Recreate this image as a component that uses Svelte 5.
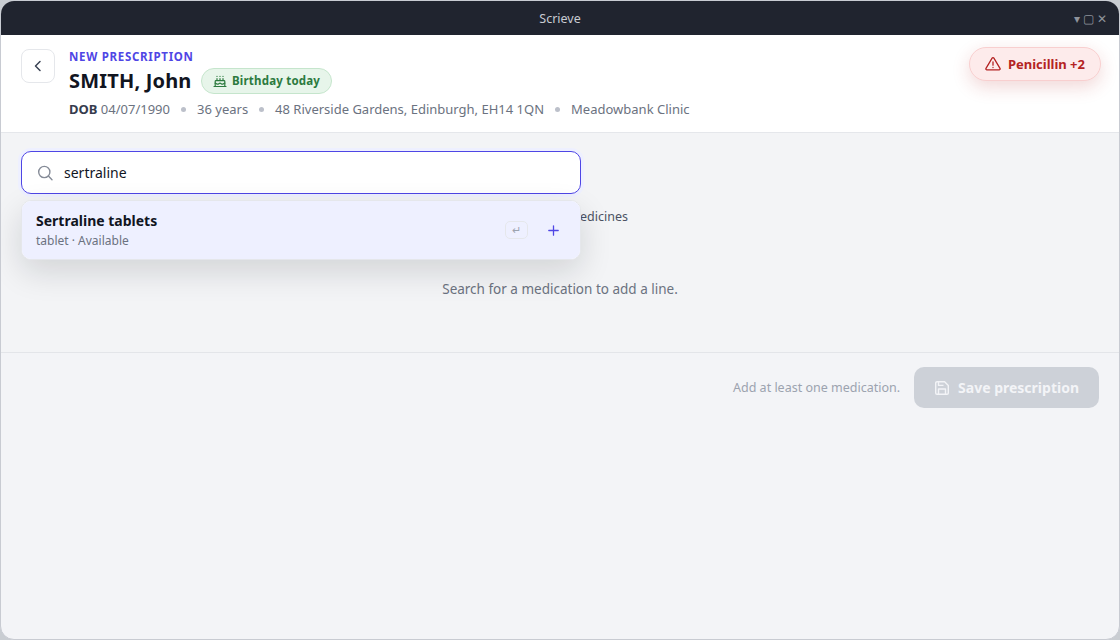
<script>
  let query = $state("sertraline");

  const patient = {
    name: "SMITH, John",
    dob: "04/07/1990",
    details: ["36 years", "48 Riverside Gardens, Edinburgh, EH14 1QN", "Meadowbank Clinic"],
  };

  const results = [{ name: "Sertraline tablets", meta: "tablet · Available" }];
</script>

<div class="window">
  <div class="titlebar">
    <span class="title">Scrieve</span>
    <span class="controls">▾ ▢ ✕</span>
  </div>

  <header class="header">
    <button class="back" aria-label="Back">
      <svg width="16" height="16" viewBox="0 0 16 16" fill="none" stroke="currentColor" stroke-width="1.5" stroke-linecap="round" stroke-linejoin="round">
        <path d="M10 3.5 5.5 8l4.5 4.5" />
      </svg>
    </button>

    <div class="patient">
      <div class="eyebrow">New prescription</div>
      <div class="name-row">
        <h1>{patient.name}</h1>
        <span class="birthday">
          <svg width="14" height="14" viewBox="0 0 14 14" fill="none" stroke="currentColor" stroke-width="1.2" stroke-linecap="round" stroke-linejoin="round">
            <path d="M1 12.5h12M2.200 12.500V7.500a.8.8 0 0 1 .8-.8h8a.8.8 0 0 1 .8.8v5" />
            <path d="M2.200 9.200c1.200 0 1.300.9 2.400.9S6 9.200 7 9.200s1.300.9 2.400.9 1.200-.9 2.400-.9" />
            <path d="M4 6.500v-2M7 6.500v-2M10 6.500v-2M4 2.400v.1M7 2.400v.1M10 2.400v.1" />
          </svg>
          <span>Birthday today</span>
        </span>
      </div>
      <div class="meta">
        <span><strong>DOB</strong> {patient.dob}</span>
        {#each patient.details as detail}
          <i class="dot"></i>
          <span>{detail}</span>
        {/each}
      </div>
    </div>

    <button class="allergy">
      <svg width="16" height="16" viewBox="0 0 16 16" fill="none" stroke="currentColor" stroke-width="1.3" stroke-linecap="round" stroke-linejoin="round">
        <path d="M7.100 2.100 1 12.300a1 1 0 0 0 .9 1.500h12.200a1 1 0 0 0 .9-1.500L8.900 2.100a1.050 1.050 0 0 0-1.800 0Z" />
        <path d="M8 5.800v3.400M8 11.500v.1" />
      </svg>
      Penicillin +2
    </button>
  </header>

  <main class="body">
    <div class="search">
      <label class="field">
        <svg width="17" height="17" viewBox="0 0 17 17" fill="none" stroke="currentColor" stroke-width="1.4" stroke-linecap="round">
          <circle cx="7.3" cy="8" r="5.6" />
          <path d="m11.400 12.100 3.600 3.600" />
        </svg>
        <input type="text" bind:value={query} />
      </label>

      <div class="dropdown">
        {#each results as result}
          <div class="result">
            <div class="result-text">
              <div class="result-name">{result.name}</div>
              <div class="result-meta">{result.meta}</div>
            </div>
            <kbd>↵</kbd>
            <svg class="plus" width="17" height="17" viewBox="0 0 17 17" fill="none" stroke="currentColor" stroke-width="1.3" stroke-linecap="round">
              <path d="M8.500 3.800v9.400M3.800 8.500h9.400" />
            </svg>
          </div>
        {/each}
      </div>
    </div>

    <div class="section">Current medicines</div>
    <p class="empty">Search for a medication to add a line.</p>
  </main>

  <footer class="footer">
    <span class="hint">Add at least one medication.</span>
    <button class="save" disabled>
      <svg width="16" height="16" viewBox="0 0 16 16" fill="none" stroke="currentColor" stroke-width="1.4" stroke-linejoin="round">
        <path d="M3 1.700h7.600l3.700 3.700V13a1.300 1.300 0 0 1-1.300 1.300H3A1.300 1.300 0 0 1 1.700 13V3A1.300 1.300 0 0 1 3 1.700Z" />
        <path d="M4.500 1.900v3.500h5M4.500 14V9h7v5" />
      </svg>
      Save prescription
    </button>
  </footer>
</div>

<style>
  :global(body) {
    background: #c9cdd2;
  }

  .window {
    box-sizing: border-box;
    height: 640px;
    border: 1px solid #c8cbd2;
    border-radius: 14px;
    overflow: hidden;
    background: #f3f4f7;
    color: #11151f;
    font-family: "Noto Sans", sans-serif;
    font-size: 13px;
  }

  button {
    font-family: inherit;
  }

  svg {
    flex: none;
  }

  .titlebar {
    display: grid;
    grid-template-columns: 1fr auto 1fr;
    align-items: center;
    height: 34px;
    background: #20242f;
  }

  .title {
    grid-column: 2;
    color: #c9ccd3;
    font-size: 12.5px;
  }

  .controls {
    justify-self: end;
    margin-right: 12px;
    color: #8f939c;
    font-size: 12.2px;
  }

  .header {
    display: flex;
    align-items: flex-start;
    box-sizing: border-box;
    height: 98px;
    padding: 12px 18px 0 20px;
    background: #fff;
    border-bottom: 1px solid #e5e7eb;
  }

  .back {
    display: flex;
    align-items: center;
    justify-content: center;
    width: 34px;
    height: 34px;
    margin: 2px 14px 0 0;
    padding: 0;
    border: 1px solid #e5e7eb;
    border-radius: 8px;
    background: #fff;
    color: #3a4254;
  }

  .patient {
    flex: 1;
  }

  .eyebrow {
    padding-top: 1px;
    color: #4f46e5;
    font-size: 11.5px;
    font-weight: 700;
    line-height: 17px;
    letter-spacing: 0.7px;
    text-transform: uppercase;
  }

  .name-row {
    display: flex;
    align-items: center;
    gap: 9.5px;
    height: 32px;
  }

  h1 {
    margin: 0;
    font-size: 20px;
    font-weight: 700;
    line-height: 28px;
    letter-spacing: 0.18px;
  }

  .birthday {
    display: flex;
    align-items: center;
    box-sizing: border-box;
    gap: 5px;
    height: 26px;
    padding: 0 11px;
    border: 1px solid #c5e5cc;
    border-radius: 13px;
    background: #e7f5ea;
    color: #2c7a3e;
    font-size: 11.5px;
    font-weight: 700;
    letter-spacing: 0.2px;
  }

  .birthday span {
    padding-bottom: 1px;
  }

  .meta {
    display: flex;
    align-items: center;
    gap: 11px;
    margin-top: 3px;
    color: #6b7280;
    font-size: 13px;
    line-height: 18px;
  }

  .meta strong {
    color: #353c4d;
  }

  .dot {
    width: 5px;
    height: 5px;
    border-radius: 50%;
    background: #bcc0ca;
  }

  .allergy {
    display: flex;
    align-items: center;
    gap: 7px;
    height: 34px;
    padding: 0 15px;
    border: 1px solid #f8cfcf;
    border-radius: 17px;
    background: #fdebeb;
    color: #b42323;
    font-size: 13px;
    font-weight: 700;
    box-shadow: 0 6px 18px rgba(180, 35, 35, 0.18);
  }

  .body {
    box-sizing: border-box;
    height: 220px;
    padding: 18px 20px 0;
    border-bottom: 1px solid #e3e5e9;
    background: #f3f4f6;
  }

  .search {
    position: relative;
    width: 560px;
  }

  .field {
    display: flex;
    align-items: center;
    box-sizing: border-box;
    gap: 10px;
    height: 43px;
    padding: 0 15px;
    border: 1px solid #4f46e5;
    border-radius: 10px;
    background: #fff;
    color: #858b97;
    box-shadow: 0 0 0 3px #eef0ff;
  }

  .field input {
    flex: 1;
    padding: 0;
    border: 0;
    outline: 0;
    background: none;
    color: #11151f;
    font: 14px "Noto Sans", sans-serif;
  }

  .dropdown {
    position: absolute;
    top: 49px;
    left: 0;
    right: 0;
    z-index: 5;
    box-sizing: border-box;
    height: 60px;
    overflow: hidden;
    border: 1px solid #e5e7eb;
    border-radius: 10px;
    background: #fff;
    box-shadow: 0 12px 32px rgba(17, 21, 31, 0.14);
  }

  .result {
    display: flex;
    align-items: center;
    box-sizing: border-box;
    height: 58px;
    padding: 0 18px 0 14px;
    background: #eef0ff;
  }

  .result-text {
    flex: 1;
  }

  .result-name {
    font-size: 14px;
    font-weight: 700;
    line-height: 20px;
  }

  .result-meta {
    padding-top: 1px;
    color: #6b7280;
    font-size: 12px;
    line-height: 17px;
  }

  kbd {
    box-sizing: border-box;
    width: 23px;
    height: 18px;
    margin-right: 17px;
    border: 1px solid #e5e7eb;
    border-radius: 5px;
    color: #9ca3af;
    font: 11px/16px "Noto Sans", sans-serif;
    text-align: center;
  }

  .plus {
    color: #4f46e5;
  }

  .section {
    width: 607px;
    margin-top: 14px;
    color: #4b5263;
    font-size: 12.5px;
    line-height: 18px;
    text-align: right;
  }

  .empty {
    margin: 53px 0 0;
    color: #6b7280;
    font-size: 13.5px;
    line-height: 20px;
    text-align: center;
  }

  .footer {
    display: flex;
    align-items: center;
    justify-content: flex-end;
    gap: 14px;
    padding: 14px 20px;
  }

  .hint {
    color: #9ca3af;
    font-size: 12.5px;
  }

  .save {
    display: flex;
    align-items: center;
    gap: 8px;
    height: 41px;
    padding: 0 20px;
    border: 0;
    border-radius: 10px;
    background: #cdd1d8;
    color: #f3f4f7;
    font-size: 14px;
    font-weight: 700;
  }
</style>
